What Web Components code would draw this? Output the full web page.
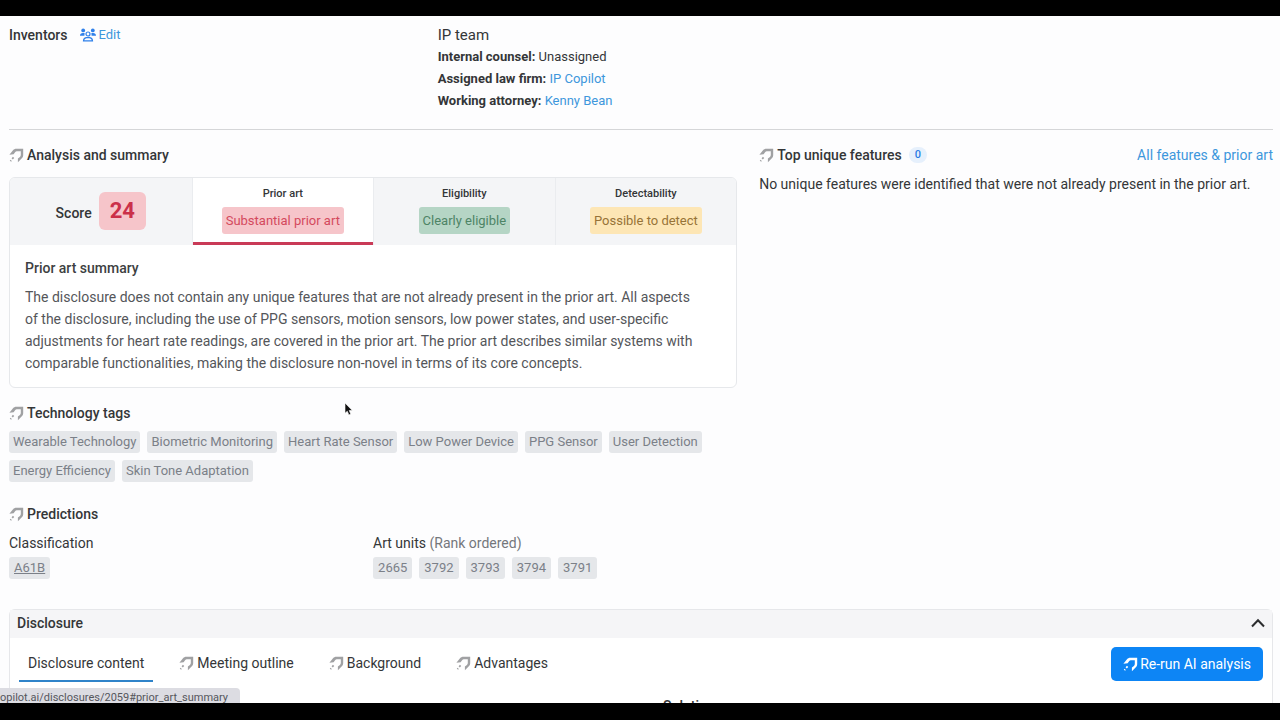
<!DOCTYPE html>
<html lang="en">
<head>
<meta charset="utf-8">
<title>Disclosure</title>
<style>
	html, body {
		margin: 0;
		height: 100%;
	}
	body {
		background: #000;
		color: #343638;
		font: 14px/22px Roboto, "Liberation Sans", sans-serif;
	}
</style>
</head>
<body>
<disclosure-page></disclosure-page>

<script>
const base = `
	*, *::before, *::after { box-sizing: border-box; }
	a { color: #3e97dc; text-decoration: none; }
	button { font: inherit; color: inherit; border: 0; background: none; padding: 0; cursor: pointer; }
	h2, h3, p { margin: 0; font-size: inherit; font-weight: 500; }
	p { font-weight: 400; }
`;

function define(name, html) {
	const template = document.createElement('template');
	template.innerHTML = html;
	customElements.define(name, class extends HTMLElement {
		constructor() {
			super();
			this.attachShadow({ mode: 'open' });
			this.shadowRoot.appendChild(template.content.cloneNode(true));
		}
	});
}

// small rocket used in front of everything generated by AI
define('ai-icon', `
	<style>
		:host { display: inline-flex; flex: none; color: #a0a1a3; }
		svg { width: 15px; height: 15px; display: block; }
	</style>
	<svg viewBox="0 0 15 15" aria-hidden="true">
		<path d="M.4 6.8 3.6 2.8C4.7 1.4 5.9.8 7.6.8H14.2V7C14.2 8.6 13.7 9.6 12.6 10.6L8.9 14.2V10.6L10.9 8.9C11.5 8.3 11.8 7.7 11.8 6.9V3.2H8.4C7.3 3.2 6.7 3.5 6.1 4.3L4.6 6.2z" fill="currentColor"/>
		<path d="M4.6 9.4 3.2 10.8M1.4 13.2 2.2 12.4" fill="none" stroke="currentColor" stroke-width="1.8"/>
	</svg>
`);

define('section-heading', `
	<style>
		${base}
		:host { display: flex; align-items: center; justify-content: space-between; }
		h2 { display: flex; align-items: center; gap: 3px; }
	</style>
	<h2><ai-icon></ai-icon><slot></slot></h2>
	<slot name="action"></slot>
`);

define('tag-chip', `
	<style>
		:host {
			display: inline-block;
			padding: 0 var(--chip-padding, 5px);
			border-radius: 3px;
			background: #e5e7ea;
			color: #7b8088;
			font-size: 13px;
			line-height: 22px;
			white-space: nowrap;
		}
	</style>
	<slot></slot>
`);

define('tag-list', `
	<style>
		:host { display: flex; flex-wrap: wrap; gap: 7px; }
		:host([dense]) { --chip-padding: 4px; }
	</style>
	<slot></slot>
`);

define('rating-tab', `
	<style>
		${base}
		:host { display: flex; background: #f4f5f7; border-left: 1px solid #eaecef; }
		:host([active]) { background: #fff; }
		button {
			flex: 1;
			display: flex;
			flex-direction: column;
			align-items: center;
			gap: 5px;
			padding: 8px 0;
			border-bottom: 3px solid transparent;
		}
		:host([active]) button { border-color: #c93a57; }
		.label { font-size: 11px; line-height: 16px; font-weight: 500; }
		.value { padding: 3px 4px; border-radius: 3px; font-size: 13px; line-height: 21px; }
		:host([tone=danger]) .value { background: #f6c5ca; color: #d4495d; }
		:host([tone=success]) .value { background: #b5d5c5; color: #4d8465; }
		:host([tone=warning]) .value { background: #fde6b5; color: #977337; }
	</style>
	<button type="button">
		<span class="label"><slot name="label"></slot></span>
		<span class="value"><slot></slot></span>
	</button>
`);

define('score-tab', `
	<style>
		${base}
		:host { display: flex; background: #f4f5f7; }
		button { flex: 1; padding-bottom: 1px; font-weight: 500; }
		.row { display: inline-flex; align-items: baseline; gap: 7px; vertical-align: middle; }
		.score { padding: 8px 11px; border-radius: 6px; background: #f6c5ca; color: #cb3049; font-size: 22px; font-weight: 700; }
	</style>
	<button type="button"><span class="row">Score <span class="score"><slot></slot></span></span></button>
`);

define('summary-card', `
	<style>
		${base}
		:host { display: block; border: 1px solid #e6e8eb; border-radius: 6px; overflow: hidden; background: #fff; }
		.tabs { display: grid; grid-template-columns: repeat(4, 1fr); }
		.body { padding: 12px 36px 13px 15px; color: #54565a; }
		h3 { margin-bottom: 7px; color: #3d3f42; }
	</style>
	<div class="tabs"><slot name="tab"></slot></div>
	<div class="body">
		<h3><slot name="title"></slot></h3>
		<p><slot></slot></p>
	</div>
`);

define('people-summary', `
	<style>
		${base}
		:host {
			display: grid;
			grid-template-columns: repeat(12, 1fr);
			column-gap: 22px;
			padding-bottom: 17px;
			border-bottom: 1px solid #d5d6d8;
		}
		.inventors { grid-column: span 4; display: flex; align-items: flex-start; gap: 12px; }
		.team { grid-column: span 8; }
		.team h2 { font-size: 15px; font-weight: 400; }
		.edit { display: inline-flex; align-items: center; gap: 3px; font-size: 13px; }
		svg { width: 16px; height: 14px; fill: #2f80ea; }
		p { font-size: 13px; }
		b { font-weight: 700; }
	</style>
	<div class="inventors">
		<h2>Inventors</h2>
		<a class="edit" href="#inventors">
			<svg viewBox="0 0 16 14" aria-hidden="true">
				<circle cx="3.2" cy="2.4" r="1.9"/>
				<circle cx="12.8" cy="2.4" r="1.9"/>
				<path d="M0 7.6C0 5.9 1.2 5 2.8 5H4.6L4.4 7.8H0zM16 7.6C16 5.9 14.8 5 13.2 5H11.4L11.6 7.8H16z"/>
				<circle cx="8" cy="6" r="2" fill="none" stroke="#2f80ea" stroke-width="1.2"/>
				<path d="M3.5 12.8C3.7 10.7 5 9.6 6.6 9.6H9.4C11 9.6 12.3 10.7 12.5 12.8z" fill="none" stroke="#2f80ea" stroke-width="1.2"/>
			</svg>Edit</a>
	</div>
	<div class="team">
		<h2>IP team</h2>
		<p><b>Internal counsel:</b> Unassigned</p>
		<p><b>Assigned law firm:</b> <a href="#firm">IP Copilot</a></p>
		<p><b>Working attorney:</b> <a href="#attorney">Kenny Bean</a></p>
	</div>
`);

define('disclosure-panel', `
	<style>
		${base}
		:host { display: block; border: 1px solid #e6e7ea; border-radius: 6px 6px 0 0; background: #fff; }
		header { display: flex; align-items: center; justify-content: space-between; padding: 2px 7px 4px; background: #f5f5f7; }
		header button { display: flex; padding: 4px 0; }
		header svg { width: 14px; height: 10px; fill: none; stroke: #2c2d2f; stroke-width: 2; }
		.bar { display: flex; justify-content: space-between; align-items: flex-start; padding: 9px 9px 0; }
		nav { display: flex; gap: 17px; }
		nav button { display: flex; align-items: center; gap: 3px; padding: 5px 9px 6px; border-bottom: 2px solid transparent; }
		nav button.active { border-color: #2f83c9; }
		.rerun {
			display: flex;
			align-items: center;
			gap: 2px;
			padding: 6px 12px;
			border-radius: 5px;
			background: #0d85f5;
			color: #fff;
		}
		.rerun ai-icon { color: #fff; }
		.columns { display: grid; grid-template-columns: 1fr 1fr; column-gap: 44px; padding: 13px 9px; }
		.columns h3 { grid-column: 2; }
	</style>
	<header>
		<h2>Disclosure</h2>
		<button type="button" aria-label="Collapse">
			<svg viewBox="0 0 14 10"><path d="M1 8.5 7 2.2 13 8.5"/></svg>
		</button>
	</header>
	<div class="bar">
		<nav>
			<button type="button" class="active">Disclosure content</button>
			<button type="button"><ai-icon></ai-icon>Meeting outline</button>
			<button type="button"><ai-icon></ai-icon>Background</button>
			<button type="button"><ai-icon></ai-icon>Advantages</button>
		</nav>
		<button type="button" class="rerun"><ai-icon></ai-icon>Re-run AI analysis</button>
	</div>
	<div class="columns"><h3>Solution</h3></div>
`);

define('disclosure-page', `
	<style>
		${base}
		:host { box-sizing: border-box; display: flex; flex-direction: column; height: 100vh; padding: 16px 0 17px; }
		main { position: relative; flex: 1; min-height: 0; overflow: hidden; padding: 8px 7px 0 9px; background: #fdfdfe; }
		.analysis { display: grid; grid-template-columns: repeat(12, 1fr); column-gap: 22px; padding-top: 14px; }
		.left { grid-column: span 7; }
		.right { grid-column: span 5; }
		summary-card { margin: 11px 0 14px; }
		tag-list { margin-top: 7px; }
		tag-chip a { color: inherit; text-decoration: underline; }
		.predictions { margin-top: 21px; }
		.right p { margin-top: 7px; }
		.count { margin-left: 4px; padding: 0 6px; border-radius: 8px; background: #e6f0fc; color: #2a7be4; font-size: 11px; line-height: 16px; }
		.halves { display: grid; grid-template-columns: 1fr 1fr; margin: 7px 0 30px; }
		.halves h3 { font-weight: 400; }
		.halves tag-list { margin-top: 3px; }
		.muted { color: #74777c; }
		.status {
			position: absolute;
			left: 0;
			bottom: 0;
			padding: 4px 12px 0 0;
			border-radius: 0 4px 0 0;
			background: #dcdce2;
			color: #55565c;
			font-size: 11px;
			line-height: 11px;
		}
		.cursor { position: absolute; left: 344px; top: 386px; width: 9px; height: 14px; }
	</style>
	<main>
		<people-summary></people-summary>
		<div class="analysis">
			<div class="left">
				<section-heading>Analysis and summary</section-heading>
				<summary-card>
					<score-tab slot="tab">24</score-tab>
					<rating-tab slot="tab" tone="danger" active><span slot="label">Prior art</span>Substantial prior art</rating-tab>
					<rating-tab slot="tab" tone="success"><span slot="label">Eligibility</span>Clearly eligible</rating-tab>
					<rating-tab slot="tab" tone="warning"><span slot="label">Detectability</span>Possible to detect</rating-tab>
					<span slot="title">Prior art summary</span>
					The disclosure does not contain any unique features that are not already present in the prior art. All aspects of the disclosure, including the use of PPG sensors, motion sensors, low power states, and user-specific adjustments for heart rate readings, are covered in the prior art. The prior art describes similar systems with comparable functionalities, making the disclosure non-novel in terms of its core concepts.
				</summary-card>
				<section-heading>Technology tags</section-heading>
				<tag-list dense>
					<tag-chip>Wearable Technology</tag-chip>
					<tag-chip>Biometric Monitoring</tag-chip>
					<tag-chip>Heart Rate Sensor</tag-chip>
					<tag-chip>Low Power Device</tag-chip>
					<tag-chip>PPG Sensor</tag-chip>
					<tag-chip>User Detection</tag-chip>
					<tag-chip>Energy Efficiency</tag-chip>
					<tag-chip>Skin Tone Adaptation</tag-chip>
				</tag-list>
				<section-heading class="predictions">Predictions</section-heading>
				<div class="halves">
					<div>
						<h3>Classification</h3>
						<tag-list><tag-chip><a href="#A61B">A61B</a></tag-chip></tag-list>
					</div>
					<div>
						<h3>Art units <span class="muted">(Rank ordered)</span></h3>
						<tag-list>
							<tag-chip>2665</tag-chip>
							<tag-chip>3792</tag-chip>
							<tag-chip>3793</tag-chip>
							<tag-chip>3794</tag-chip>
							<tag-chip>3791</tag-chip>
						</tag-list>
					</div>
				</div>
			</div>
			<div class="right">
				<section-heading>
					Top unique features <span class="count">0</span>
					<a slot="action" href="#features">All features &amp; prior art</a>
				</section-heading>
				<p>No unique features were identified that were not already present in the prior art.</p>
			</div>
		</div>
		<disclosure-panel></disclosure-panel>
		<div class="status">opilot.ai/disclosures/2059#prior_art_summary</div>
		<svg class="cursor" viewBox="0 0 9 14" aria-hidden="true">
			<path d="M1 1V11.2L3.3 9.2 4.9 12.9 6.8 12.1 5.2 8.5H8.3z" fill="#111" stroke="#fff" stroke-width=".6"/>
		</svg>
	</main>
`);
</script>
</body>
</html>
